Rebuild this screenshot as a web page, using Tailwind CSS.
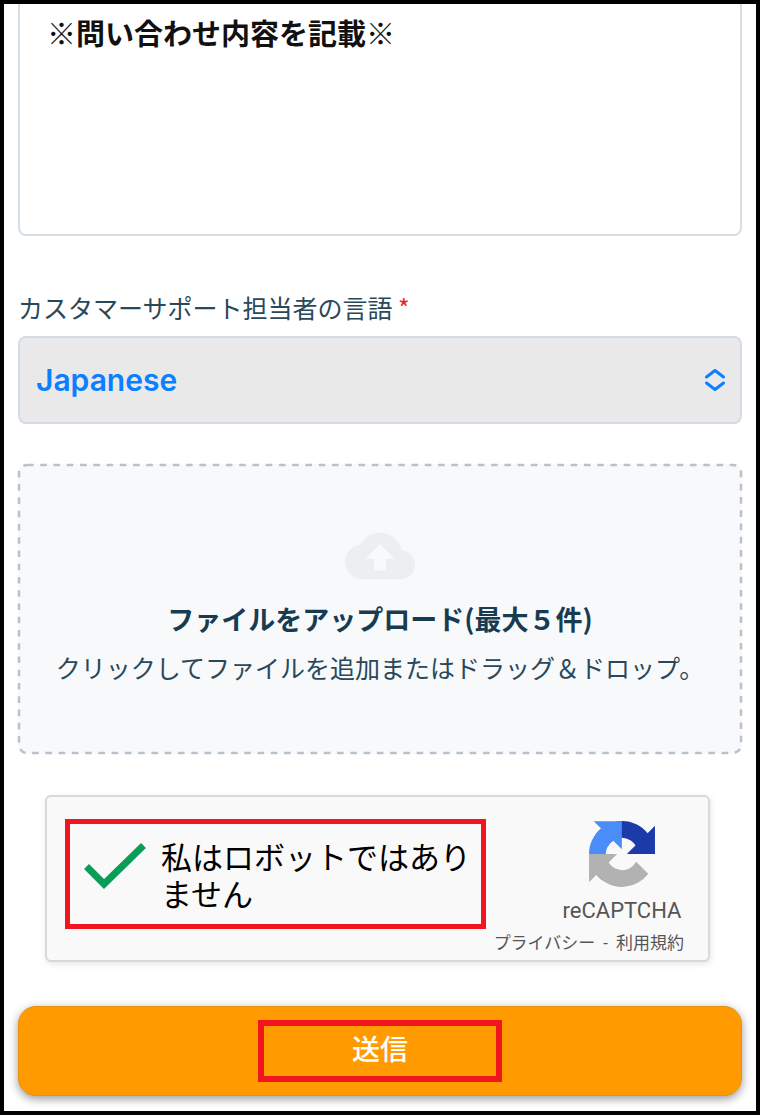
<!DOCTYPE html>
<html lang="ja">
  <head>
    <meta charset="UTF-8" />
    <meta name="viewport" content="width=device-width, initial-scale=1.0" />
    <title>お問い合わせ</title>
    <script src="https://cdn.jsdelivr.net/npm/@tailwindcss/browser@4"></script>
  </head>
  <body class="bg-white font-['Noto_Sans_CJK_JP',sans-serif]">
    <form class="min-h-screen border-4 border-black bg-white px-[14px] pb-[15px]">
      <!-- Message -->
      <textarea
        aria-label="お問い合わせ内容"
        class="block w-full h-[232px] resize-none rounded-b-lg border-x-2 border-b-2 border-[#d5dde5] bg-white px-[27px] pt-2 text-[29px] leading-10 font-bold text-[#111] focus:outline-none"
      >※問い合わせ内容を記載※</textarea>

      <!-- Support language -->
      <label for="language" class="mt-[51px] mb-[9px] block text-[25px] leading-10 text-[#29485a]">
        カスタマーサポート担当者の言語
        <span class="text-[#e8262b]">*</span>
      </label>
      <div class="relative">
        <select
          id="language"
          class="block w-full h-[88px] appearance-none rounded-lg border-2 border-[#d3dce4] bg-[#e9e9e9] px-4 font-[Inter,sans-serif] text-[30px] font-semibold text-[#0a7fff]"
        >
          <option>Japanese</option>
        </select>
        <svg class="pointer-events-none absolute right-4 top-1/2 h-6 w-[22px] -translate-y-1/2" viewBox="0 0 22 24" fill="none" stroke="#0a7fff" stroke-width="3" stroke-linecap="round" stroke-linejoin="round">
          <path d="M2.500 9 11 2.500 19.500 9M2.500 15 11 21.500 19.500 15" />
        </svg>
      </div>

      <!-- Upload -->
      <label class="relative mt-10 flex flex-col items-center gap-2 rounded-lg bg-[#f8f9fb] pt-[57px] pb-[67px] text-center">
        <input type="file" multiple class="sr-only" />
        <svg class="absolute inset-0 h-full w-full p-px overflow-visible" fill="none" aria-hidden="true">
          <rect width="100%" height="100%" rx="8" stroke="#b9c2ca" stroke-width="2.500" stroke-dasharray="6.600 6.660" />
        </svg>
        <svg class="h-[70px] w-[70px]" viewBox="0 0 24 24" fill="#ebefef">
          <path d="M19.350 10.040C18.670 6.590 15.640 4 12 4 9.110 4 6.600 5.640 5.350 8.040 2.340 8.360 0 10.910 0 14c0 3.310 2.690 6 6 6h13c2.760 0 5-2.240 5-5 0-2.640-2.050-4.780-4.650-4.960zM14 13v4h-4v-4H7l5-5 5 5h-3z" />
        </svg>
        <span class="text-[27px] leading-10 font-bold text-[#173b50]">ファイルをアップロード(最大５件)</span>
        <span class="text-[25px] leading-10 text-[#29485a]">クリックしてファイルを追加またはドラッグ＆ドロップ。</span>
      </label>

      <!-- reCAPTCHA -->
      <div class="mt-[41px] ml-[27px] mr-8 flex h-[167px] items-start justify-between rounded-md border-2 border-[#d9d9d9] bg-[#f9f9f9] pl-[18px] pr-6 shadow-[1px_2px_6px_rgba(0,0,0,0.1)]">
        <label class="mt-[22px] flex h-[110px] w-[421px] shrink-0 items-center border-[5px] border-[#f2151f] pl-[14px]">
          <input type="checkbox" checked class="peer sr-only" />
          <svg class="hidden h-[46px] w-[62px] shrink-0 -mt-4 peer-checked:block" viewBox="0 0 62 46" fill="none" stroke="#0b9d58" stroke-width="7">
            <path d="M2.500 23.500 20 41 59.500 2.500" />
          </svg>
          <span class="ml-[15px] text-[31px] leading-[37px] text-black">私はロボットではありません</span>
        </label>
        <div class="mt-6 flex flex-col items-end">
          <div class="flex w-[124px] flex-col items-center">
            <svg class="h-[66px] w-[66px]" viewBox="0 0 64 64">
              <path fill="#1c3aa9" d="M64 31.955l-.033-1.370V4.687l-7.160 7.160C50.948 4.674 42.033.093 32.050.093c-10.400 0-19.622 4.960-25.458 12.640l11.736 11.860a15.550 15.550 0 0 1 4.754-5.334c2.050-1.600 4.952-2.906 8.968-2.906.485 0 .86.057 1.135.163 4.976.393 9.288 3.140 11.828 7.124l-8.307 8.307L64 31.953" />
              <path fill="#4b8df8" d="M31.862.094l-1.370.033H4.594l7.160 7.160C4.580 13.147 0 22.060 0 32.046c0 10.400 4.960 19.622 12.640 25.458L24.500 45.768a15.550 15.550 0 0 1-5.334-4.754c-1.600-2.050-2.906-4.952-2.906-8.968 0-.485.057-.86.163-1.135.393-4.976 3.140-9.288 7.124-11.828l8.307 8.307L31.860.095" />
              <path fill="#b2b2b2" d="M.001 32.045l.033 1.370v25.898l7.160-7.160c5.860 7.173 14.774 11.754 24.760 11.754 10.400 0 19.622-4.960 25.458-12.640l-11.736-11.860a15.550 15.550 0 0 1-4.754 5.334c-2.050 1.600-4.952 2.906-8.968 2.906-.485 0-.86-.057-1.135-.163-4.976-.393-9.288-3.140-11.828-7.124l8.307-8.307c-10.522.04-22.400.066-27.295-.005" />
            </svg>
            <span class="mt-2 font-[Roboto,sans-serif] text-[22px] leading-8 text-[#555]">reCAPTCHA</span>
          </div>
          <div class="flex gap-2 whitespace-nowrap font-[Roboto,'Noto_Sans_CJK_JP',sans-serif] text-[17px] leading-8 text-[#555]">
            <a href="#">プライバシー</a>
            <span>-</span>
            <a href="#">利用規約</a>
          </div>
        </div>
      </div>

      <!-- Submit -->
      <button
        type="submit"
        class="mt-11 flex h-[90px] w-full items-center justify-center rounded-[18px] border border-[#e69210] bg-[#ff9b00] pb-px shadow-[0_3px_10px_rgba(0,0,0,0.4)]"
      >
        <span class="flex h-[62px] w-[244px] items-center justify-center border-[6px] border-[#f0151f] pb-1.5 text-[28px] font-medium text-white">送信</span>
      </button>
    </form>
  </body>
</html>
